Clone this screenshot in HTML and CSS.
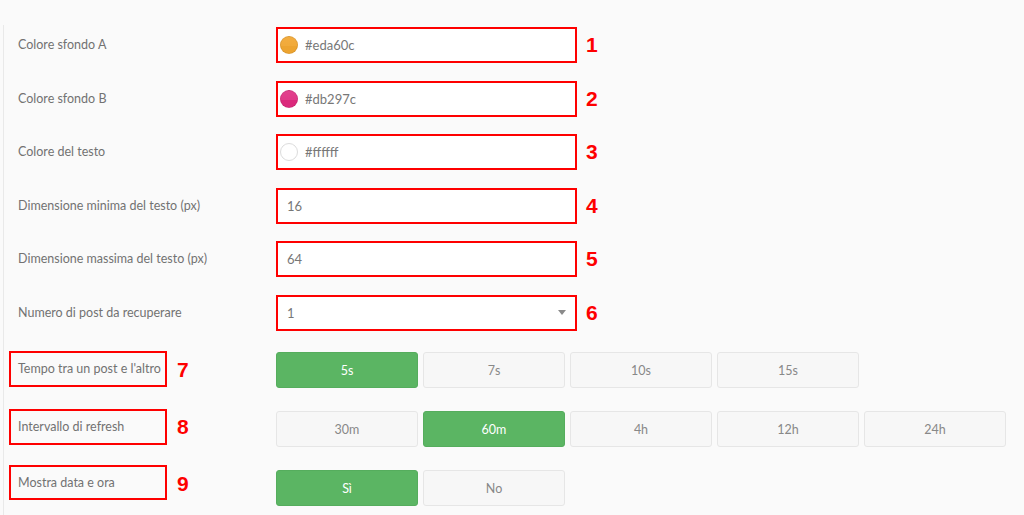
FILE: index.html
```html
<!DOCTYPE html>
<html lang="it">
<head>
<meta charset="utf-8">
<title>Impostazioni</title>
<link rel="stylesheet" href="styles.css">
</head>
<body>
<div class="panel">
  <div class="form">
    <div class="row">
      <div class="label">Colore sfondo A</div>
      <div class="control">
        <div class="input color"><span class="swatch swatch-orange"></span><span class="val">#eda60c</span></div>
        <span class="mark">1</span>
      </div>
    </div>
    <div class="row">
      <div class="label">Colore sfondo B</div>
      <div class="control">
        <div class="input color"><span class="swatch swatch-pink"></span><span class="val">#db297c</span></div>
        <span class="mark">2</span>
      </div>
    </div>
    <div class="row">
      <div class="label">Colore del testo</div>
      <div class="control">
        <div class="input color"><span class="swatch swatch-white"></span><span class="val">#ffffff</span></div>
        <span class="mark">3</span>
      </div>
    </div>
    <div class="row">
      <div class="label">Dimensione minima del testo (px)</div>
      <div class="control">
        <div class="input text"><span class="val">16</span></div>
        <span class="mark">4</span>
      </div>
    </div>
    <div class="row">
      <div class="label">Dimensione massima del testo (px)</div>
      <div class="control">
        <div class="input text"><span class="val">64</span></div>
        <span class="mark">5</span>
      </div>
    </div>
    <div class="row">
      <div class="label">Numero di post da recuperare</div>
      <div class="control">
        <div class="input text select"><span class="val">1</span><span class="caret"></span></div>
        <span class="mark">6</span>
      </div>
    </div>

    <div class="row btnrow first">
      <div class="label boxed-wrap">
        <span class="boxed b7">Tempo tra un post e l'altro</span><span class="mark mark-l">7</span>
      </div>
      <div class="buttons">
        <span class="btn on">5s</span>
        <span class="btn">7s</span>
        <span class="btn">10s</span>
        <span class="btn">15s</span>
      </div>
    </div>
    <div class="row btnrow">
      <div class="label boxed-wrap">
        <span class="boxed b8">Intervallo di refresh</span><span class="mark mark-l m8">8</span>
      </div>
      <div class="buttons">
        <span class="btn">30m</span>
        <span class="btn on">60m</span>
        <span class="btn">4h</span>
        <span class="btn">12h</span>
        <span class="btn">24h</span>
      </div>
    </div>
    <div class="row btnrow">
      <div class="label boxed-wrap">
        <span class="boxed b9">Mostra data e ora</span><span class="mark mark-l m9">9</span>
      </div>
      <div class="buttons">
        <span class="btn on">Sì</span>
        <span class="btn">No</span>
      </div>
    </div>
  </div>
</div>
</body>
</html>
```
FILE: styles.css
```css
* { box-sizing: border-box; }
html, body {
  margin: 0;
  padding: 0;
  background: #fafafa;
  font-family: Lato, "Open Sans", sans-serif;
  color: #777;
}
body {
  height: 515px;
  overflow: hidden;
}
.panel {
  margin: 25px 0 0 3px;
  border-left: 1px solid #e9e9e9;
  height: 490px;
}
.form {
  padding-top: 2px;
}
.row {
  display: grid;
  grid-template-columns: 258px 1fr;
  margin-left: 14px;
  margin-bottom: 17.5px;
  align-items: center;
}
.label {
  font-size: 12.5px;
  color: #727272;
  line-height: 16px;
}
.control {
  display: flex;
  align-items: center;
}
.input {
  width: 301px;
  height: 36px;
  border: 2px solid #fe0000;
  background: #fff;
  display: flex;
  align-items: center;
  font-size: 13px;
  color: #777;
}
.input.color { padding-left: 2px; }
.input.text { padding-left: 9px; }
.input.select { padding-right: 9px; justify-content: space-between; }
.swatch {
  width: 18px;
  height: 18px;
  border-radius: 50%;
  margin-right: 7px;
  border: 1px solid rgba(0,0,0,0.08);
}
.swatch-orange { background: linear-gradient(to bottom, #f3ad40 0%, #f1aa3a 55%, #eda430 56%, #eda430 100%); }
.swatch-pink { background: linear-gradient(to bottom, #e2418e 0%, #e03a88 55%, #db297c 56%, #db297c 100%); }
.swatch-white { background: #fff; border-color: #dcdcdc; }
.caret {
  width: 0;
  height: 0;
  border-left: 4px solid transparent;
  border-right: 4px solid transparent;
  border-top: 5px solid #8a8a8a;
}
.mark {
  font-family: "Liberation Sans", Arial, sans-serif;
  font-weight: bold;
  font-size: 21px;
  color: #fe0000;
  margin-left: 9px;
  line-height: 20px;
}
.btnrow {
  margin-bottom: 23px;
  height: 36px;
}
.btnrow.first { margin-top: 21.5px; }
.boxed-wrap {
  display: flex;
  align-items: center;
  margin-left: -9px;
  height: 36px;
}
.boxed {
  display: block;
  width: 158px;
  height: 36px;
  border: 2px solid #fe0000;
  padding: 0 0 0 7px;
  line-height: 31px;
  white-space: nowrap;
}
.b7 { margin-top: -2px; }
.b8 { margin-top: -5px; height: 36px; }
.b9 { margin-top: -11px; height: 35px; }
.mark-l { margin-left: 10px; }
.m8 { margin-top: -5px; }
.m9 { margin-top: -9px; }
.buttons {
  display: flex;
  gap: 5px;
}
.btn {
  width: 142px;
  height: 36px;
  border: 1px solid #e6e6e6;
  border-radius: 3px;
  background: #f7f7f7;
  color: #888;
  font-size: 12.5px;
  display: flex;
  align-items: center;
  justify-content: center;
}
.btn.on {
  background: #5bb563;
  border-color: #55ad5d;
  color: #fff;
}
```
